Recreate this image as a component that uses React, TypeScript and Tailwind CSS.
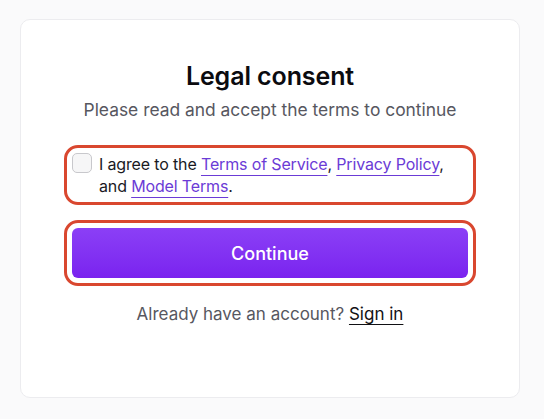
import React from "react";

export default function App() {
  return (
    <div
      className="min-h-screen w-full bg-[#fafafb] pt-[19px] pl-[20px]"
      style={{ fontFamily: "Inter, 'Noto Sans', sans-serif" }}
    >
      <div className="w-[500px] h-[379px] rounded-[10px] border border-[#ececef] bg-white px-[51px] pt-[40px] flex flex-col">
        <h1 className="text-center text-[25px] leading-[32px] font-semibold text-[#0b0b0f] tracking-[-0.1px]">
          Legal consent
        </h1>
        <p className="mt-[6px] text-center text-[17.4px] leading-[24px] text-[#57575f]">
          Please read and accept the terms to continue
        </p>
        <div className="mt-[31px] flex items-start gap-[7px] rounded-[6px] outline-[3px] outline-solid outline-[#d9472f] outline-offset-[5px]">
          <div className="h-[20px] w-[20px] shrink-0 rounded-[5px] border border-[#c8c8cc] bg-[#f6f6f7]" />
          <p className="text-[16px] leading-[22px] text-[#1a1a1f] tracking-[-0.15px]">
            I agree to the{" "}
            <a className="text-[#6b3bd6] underline decoration-[#6b3bd6] underline-offset-[5px] decoration-1">
              Terms of Service
            </a>
            ,{" "}
            <a className="text-[#6b3bd6] underline decoration-[#6b3bd6] underline-offset-[5px] decoration-1">
              Privacy Policy
            </a>
            , and{" "}
            <a className="text-[#6b3bd6] underline decoration-[#6b3bd6] underline-offset-[5px] decoration-1">
              Model Terms
            </a>
            .
          </p>
        </div>
        <button className="mt-[31px] h-[50px] w-full rounded-[6px] bg-gradient-to-b from-[#8b3ff6] to-[#7a22ef] text-[18px] font-medium text-white outline-[3px] outline-solid outline-[#d9472f] outline-offset-[5px]">
          Continue
        </button>
        <p className="mt-[24px] text-center text-[17px] leading-[24px] text-[#57575f]">
          Already have an account?{" "}
          <a className="text-[#111114] underline decoration-[#111114] underline-offset-[4px] decoration-1">
            Sign in
          </a>
        </p>
      </div>
    </div>
  );
}
